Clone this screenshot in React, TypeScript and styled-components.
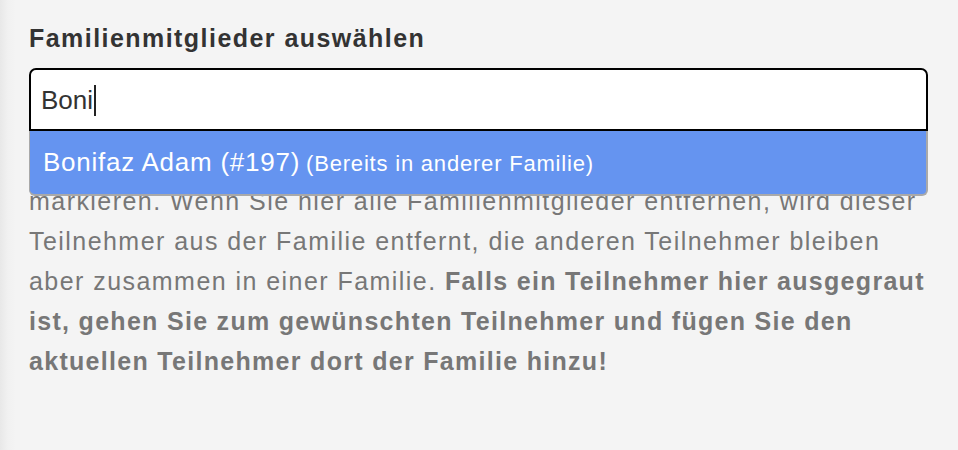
import styled, { createGlobalStyle } from "styled-components";

const GlobalStyle = createGlobalStyle`
    html, body {
        margin: 0;
        padding: 0;
        background: #f4f4f4;
        font-family: "Liberation Sans", Arial, sans-serif;
    }
`

const Page = styled.div`
    min-height: 100vh;
    box-sizing: border-box;
    padding: 23px 30px 0 29px;
    background: linear-gradient(to right, #e8e8e8 0, #f1f1f1 8px, #f4f4f4 16px);
`

const Field = styled.div`
    width: 899px;
`

const Label = styled.label`
    display: block;
    font-size: 25px;
    line-height: 30px;
    font-weight: bold;
    letter-spacing: 1.45px;
    color: #333;
    margin-bottom: 15px;
`

const Combo = styled.div`
    position: relative;
`

const InputBox = styled.div`
    box-sizing: border-box;
    height: 63px;
    display: flex;
    align-items: center;
    padding: 1px 10px 0 10px;
    background: #fff;
    border: 2px solid #000;
    border-radius: 7px 7px 0 0;
    font-size: 26px;
    color: #333;
`

const Caret = styled.span`
    display: inline-block;
    width: 2px;
    height: 31px;
    margin-left: 1px;
    background: #222;
`

const Listbox = styled.ul`
    position: absolute;
    top: 100%;
    left: 0;
    right: 0;
    margin: 0;
    padding: 0;
    list-style: none;
    background: #6594f0;
    border: 1px solid #a9a9a9;
    border-top: none;
    border-right-width: 2px;
    border-bottom-width: 2px;
    border-radius: 0 0 6px 6px;
    z-index: 5;
`

const Option = styled.li<{ $active?: boolean }>`
    height: 63px;
    line-height: 63px;
    padding: 0 13px;
    color: ${p => (p.$active ? "#fff" : "#333")};
    white-space: nowrap;
`

const Name = styled.span`
    font-size: 26px;
    letter-spacing: 0.75px;
`

const Note = styled.span`
    font-size: 22px;
    letter-spacing: 0.8px;
    margin-left: 6px;
`

const Help = styled.p`
    margin: 10px 0 0 0;
    font-size: 25px;
    line-height: 40px;
    letter-spacing: 1.45px;
    color: #777;

    b {
        letter-spacing: 1.3px;
    }
`

function App() {
    const results = [{ id: 197, name: "Bonifaz Adam", note: "(Bereits in anderer Familie)" }]

    return (
        <>
            <GlobalStyle />
            <Page>
                <Field>
                    <Label>Familienmitglieder auswählen</Label>
                    <Combo>
                        <InputBox>
                            Boni<Caret />
                        </InputBox>
                        <Listbox>
                            {results.map(r => (
                                <Option key={r.id} $active>
                                    <Name>{r.name} (#{r.id})</Name>
                                    <Note>{r.note}</Note>
                                </Option>
                            ))}
                        </Listbox>
                    </Combo>
                    <Help>
                        Hier können Sie die gewünschten Teilnehmer als Familienmitglieder markieren. Wenn Sie hier
                        alle Familienmitglieder entfernen, wird dieser Teilnehmer aus der Familie entfernt, die
                        anderen Teilnehmer bleiben aber zusammen in einer Familie.{" "}
                        <b>
                            Falls ein Teilnehmer hier ausgegraut ist, gehen Sie zum gewünschten Teilnehmer und fügen
                            Sie den aktuellen Teilnehmer dort der Familie hinzu!
                        </b>
                    </Help>
                </Field>
            </Page>
        </>
    )
}

export default App;
